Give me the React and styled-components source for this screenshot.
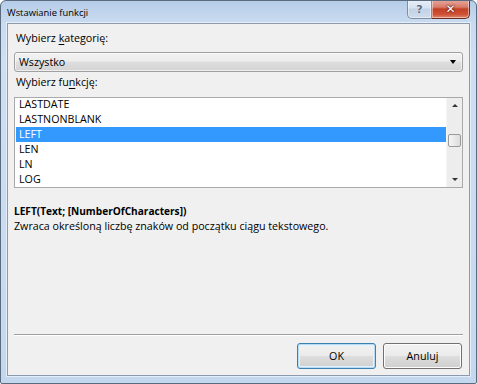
import React from "react";
import styled, { createGlobalStyle } from "styled-components";

const Global = createGlobalStyle`
  html, body { margin: 0; padding: 0; background: #ffffff; }
  body { font-family: "Open Sans", "Noto Sans", sans-serif; }
`;

const Window = styled.div`
  box-sizing: border-box;
  width: 477px;
  height: 384px;
  border: 1px solid #5a6b80;
  border-radius: 6px 6px 2px 2px;
  background: linear-gradient(180deg, #b6cde8 0px, #c9dbf0 22px, #cfdff2 60px, #c3d8ef 100%);
  display: flex;
  flex-direction: column;
  overflow: hidden;
`;

const TitleBar = styled.div`
  height: 22px;
  display: flex;
  align-items: flex-start;
  padding-left: 6px;
`;

const Title = styled.div`
  font-size: 9.4px;
  line-height: 23px;
  color: #000;
`;

const Caption = styled.div`
  margin-left: auto;
  margin-right: 6px;
  margin-top: -1px;
  display: flex;
`;

const CapButton = styled.div`
  box-sizing: border-box;
  width: ${(p) => p.w}px;
  height: 19px;
  border: 1px solid ${(p) => (p.close ? "#6b2b22" : "#7f8fa3")};
  border-top: none;
  border-radius: ${(p) => (p.close ? "0 0 5px 0" : "0 0 0 5px")};
  ${(p) => (p.close ? "border-left: none;" : "")}
  background: ${(p) =>
    p.close
      ? "linear-gradient(180deg, #e8a89c 0%, #d77b6a 40%, #c33f25 50%, #cf5236 80%, #e0876a 100%)"
      : "linear-gradient(180deg, #e8eff8 0%, #d6e2f0 45%, #c2d2e6 50%, #cfdcec 100%)"};
  box-shadow: inset 0 0 0 1px rgba(255, 255, 255, 0.45);
  display: flex;
  align-items: center;
  justify-content: center;
  font-family: "DejaVu Sans", sans-serif;
  font-weight: bold;
  font-size: ${(p) => (p.close ? 12 : 11)}px;
  color: ${(p) => (p.close ? "#ffffff" : "#5e6d80")};
  text-shadow: ${(p) =>
    p.close
      ? "0 0 1px #5b1e12, 0 0 1px #5b1e12, 0 0 2px #5b1e12"
      : "0 0 1px #ffffff"};
`;

const Client = styled.div`
  box-sizing: border-box;
  flex: 1;
  margin: 0 6px 7px 6px;
  border: 1px solid #8c9aab;
  background: #f0f0f0;
  box-shadow: 0 0 0 1px #e4edf8;
  display: flex;
  flex-direction: column;
  padding: 7px 6px 6px 6px;
  font-size: 10.7px;
  color: #000;
`;

const Label = styled.div`
  margin-left: 2px;
  margin-top: ${(p) => p.mt || 0}px;
  line-height: 15px;
  height: 15px;
  & u { text-decoration: underline; text-underline-offset: 2px; }
`;

const Select = styled.div`
  box-sizing: border-box;
  margin-top: 6px;
  height: 20px;
  border: 1px solid #a0a0a0;
  border-radius: 3px;
  background: linear-gradient(180deg, #f3f3f3 0%, #ececec 45%, #dedede 50%, #d4d4d4 100%);
  box-shadow: inset 0 0 0 1px rgba(255, 255, 255, 0.6);
  display: flex;
  align-items: center;
  padding: 0 6px 0 4px;
  line-height: 18px;
`;

const Arrow = styled.div`
  margin-left: auto;
  width: 0;
  height: 0;
  border-left: 3.5px solid transparent;
  border-right: 3.5px solid transparent;
  border-top: 4px solid #000;
`;

const List = styled.div`
  box-sizing: border-box;
  margin-top: 7px;
  height: 91px;
  border: 1px solid #a9a9a9;
  background: #ffffff;
  display: flex;
  padding: 0 0 0 1px;
`;

const Items = styled.div`
  flex: 1;
  margin-top: -1px;
`;

const Item = styled.div`
  height: 15px;
  line-height: 15px;
  padding-left: 3px;
  background: ${(p) => (p.sel ? "#3399ff" : "transparent")};
  color: ${(p) => (p.sel ? "#ffffff" : "#000000")};
`;

const Scroll = styled.div`
  width: 15px;
  background: #ededed;
  border-left: 1px solid #f6f6f6;
  display: flex;
  flex-direction: column;
  align-items: center;
`;

const ScrollArrow = styled.div`
  height: 15px;
  display: flex;
  align-items: center;
  justify-content: center;
  &::after {
    content: "";
    width: 0;
    height: 0;
    border-left: 3px solid transparent;
    border-right: 3px solid transparent;
    ${(p) => (p.up ? "border-bottom: 3px solid #333;" : "border-top: 3px solid #333;")}
  }
`;

const Track = styled.div`
  flex: 1;
  width: 100%;
  display: flex;
  flex-direction: column;
`;

const Thumb = styled.div`
  box-sizing: border-box;
  margin: 21px 1px 0 1px;
  height: 13px;
  border: 1px solid #9a9a9a;
  border-radius: 2px;
  background: linear-gradient(90deg, #f4f4f4 0%, #e9e9e9 50%, #dcdcdc 100%);
`;

const Signature = styled.div`
  margin-top: 16px;
  font-weight: bold;
  font-size: 10.1px;
  line-height: 15px;
`;

const Desc = styled.div`
  line-height: 15px;
`;

const Separator = styled.div`
  margin-top: auto;
  height: 1px;
  background: #a0a0a0;
  border-bottom: 1px solid #ffffff;
`;

const Footer = styled.div`
  margin-top: 7px;
  display: flex;
  justify-content: flex-end;
  gap: 7px;
  padding-right: 1px;
`;

const Button = styled.div`
  box-sizing: border-box;
  width: 79px;
  height: 26px;
  border: 1px solid ${(p) => (p.def ? "#3c7fb1" : "#707070")};
  border-radius: 3px;
  background: linear-gradient(180deg, #f2f2f2 0%, #ebebeb 48%, #dddddd 52%, #cfcfcf 100%);
  box-shadow: ${(p) =>
    p.def ? "inset 0 0 0 1px #b6dbf2, inset 0 0 0 2px #e3f2fb" : "inset 0 0 0 1px #fcfcfc"};
  display: flex;
  align-items: center;
  justify-content: center;
  font-size: 10.7px;
`;

const items = ["LASTDATE", "LASTNONBLANK", "LEFT", "LEN", "LN", "LOG"];

export default function App() {
  return (
    <>
      <Global />
      <Window>
        <TitleBar>
          <Title>Wstawianie funkcji</Title>
          <Caption>
            <CapButton w={25}>?</CapButton>
            <CapButton w={38} close>
              ✕
            </CapButton>
          </Caption>
        </TitleBar>
        <Client>
          <Label>
            Wybierz <u>k</u>ategorię:
          </Label>
          <Select>
            Wszystko
            <Arrow />
          </Select>
          <Label mt={3}>
            Wybierz fu<u>n</u>kcję:
          </Label>
          <List>
            <Items>
              {items.map((it) => (
                <Item key={it} sel={it === "LEFT"}>
                  {it}
                </Item>
              ))}
            </Items>
            <Scroll>
              <ScrollArrow up />
              <Track>
                <Thumb />
              </Track>
              <ScrollArrow />
            </Scroll>
          </List>
          <Signature>LEFT(Text; [NumberOfCharacters])</Signature>
          <Desc>Zwraca określoną liczbę znaków od początku ciągu tekstowego.</Desc>
          <Separator />
          <Footer>
            <Button def>OK</Button>
            <Button>Anuluj</Button>
          </Footer>
        </Client>
      </Window>
    </>
  );
}
